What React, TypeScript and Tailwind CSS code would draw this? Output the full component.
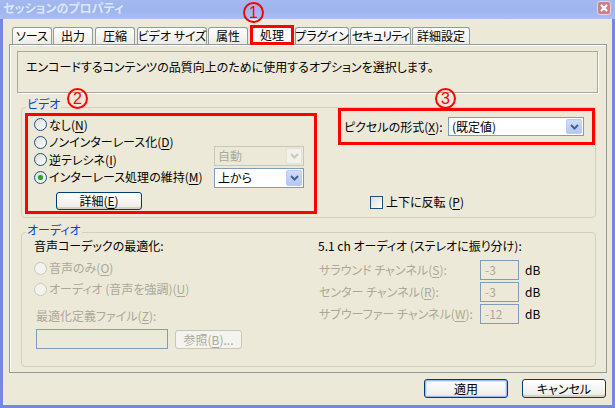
import React from "react";

type Kids = { children?: React.ReactNode };

const Mn: React.FC<Kids> = ({ children }) => <span className="underline underline-offset-[2px]">{children}</span>;

const Chevron: React.FC<{ color: string }> = ({ color }) => (
  <svg width="9" height="6" viewBox="0 0 9 6">
    <path d="M1 1 L4.5 4.5 L8 1" fill="none" stroke={color} strokeWidth="2" />
  </svg>
);

const Radio: React.FC<Kids & { checked?: boolean; disabled?: boolean; className?: string }> = ({
  checked = false,
  disabled = false,
  className = "",
  children,
}) => (
  <div className={`flex items-center gap-[2px] ${disabled ? "text-[#ACA899]" : "text-black"} ${className}`}>
    <span
      className={`flex h-[13px] w-[13px] items-center justify-center rounded-full border ${
        disabled ? "border-[#CAC8BB] bg-[#F4F3EE]" : "border-[#1C5180] bg-gradient-to-br from-[#DCDCD7] to-white"
      }`}
    >
      {checked && <span className="h-[5px] w-[5px] rounded-full bg-[#2FA12F] shadow-[0_0_1px_#6BD06B]" />}
    </span>
    <span className="whitespace-nowrap">{children}</span>
  </div>
);

const Combo: React.FC<{ value: string; disabled?: boolean; className: string }> = ({ value, disabled = false, className }) => (
  <div
    className={`flex items-center justify-between border pl-[3px] ${
      disabled ? "border-[#C9C7BA] bg-[#ECE9D8] text-[#ACA899]" : "border-[#7F9DB9] bg-white text-black"
    } ${className}`}
  >
    <span className="whitespace-nowrap">{value}</span>
    <span
      className={`mr-[1px] flex h-[calc(100%-2px)] w-[16px] items-center justify-center rounded-[2px] border ${
        disabled ? "border-[#E3E1D6] bg-[#F2F1EB]" : "border-[#B9CDFA] bg-gradient-to-b from-[#CFDCFB] to-[#B3C7F6]"
      }`}
    >
      <Chevron color={disabled ? "#C9C7BA" : "#4D6185"} />
    </span>
  </div>
);

const XPButton: React.FC<Kids & { className: string; def?: boolean; disabled?: boolean }> = ({
  children,
  className,
  def = false,
  disabled = false,
}) => (
  <div
    className={`flex items-center justify-center rounded-[3px] border whitespace-nowrap ${
      disabled
        ? "border-[#C9C7BA] bg-[#F4F3EE] text-[#ACA899]"
        : "border-[#003C74] bg-gradient-to-b from-white to-[#ECEBE6] text-black"
    } ${def ? "shadow-[inset_0_0_0_1px_#9DBCF2,inset_0_0_0_2px_#CEE7FF]" : disabled ? "" : "shadow-[inset_0_-2px_0_#D6D0C5]"} ${className}`}
  >
    {children}
  </div>
);

const TextBox: React.FC<{ value?: string; className: string }> = ({ value = "", className }) => (
  <div className={`flex items-center border border-[#7F9DB9] bg-[#ECE9D8] pl-[4px] text-[#ACA899] ${className}`}>{value}</div>
);

const Circled: React.FC<{ n: string; className: string }> = ({ n, className }) => (
  <div
    className={`absolute z-20 flex h-[21px] w-[21px] items-center justify-center rounded-full border-2 border-[#FF0000] font-['Liberation_Sans',sans-serif] text-[16px] leading-none text-[#FF0000] ${className}`}
  >
    {n}
  </div>
);

const tabs = [
  { label: "ソース", cls: "w-[40px] mr-[1px]" },
  { label: "出力", cls: "w-[40px] mr-[2px]" },
  { label: "圧縮", cls: "w-[40px] mr-[2px]" },
  { label: "ビデオ サイズ", cls: "w-[70px] mr-[1px]" },
  { label: "属性", cls: "w-[40px] mr-[2px]" },
  { label: "処理", cls: "w-[44px] mr-[1px]", active: true },
  { label: "プラグイン", cls: "w-[54px] mr-[1px]" },
  { label: "セキュリティ", cls: "w-[61px] mr-[1px] tracking-[-0.8px]" },
  { label: "詳細設定", cls: "w-[58px]" },
];

const channels = [
  { label: "サラウンド チャンネル", key: "S", value: "-3", cls: "mt-[7px]" },
  { label: "センター チャンネル", key: "R", value: "-3", cls: "mt-[2px]" },
  { label: "サブウーファー チャンネル", key: "W", value: "-12", cls: "mt-[2px]" },
];

export default function App() {
  return (
    <div className="relative flex h-[408px] w-[615px] flex-col overflow-hidden bg-[#ECE9D8] font-['Noto_Sans_CJK_JP',sans-serif] text-[12px] leading-[14px] text-black [font-feature-settings:'palt']">
      {/* title bar */}
      <div className="flex h-[19px] shrink-0 items-center justify-between bg-gradient-to-b from-[#A3B9EF] via-[#9DB4EE] to-[#A9BEF1] pl-[3px] pr-[4px]">
        <span className="mt-[-4px] text-[12px] font-bold text-[#DCE6FA]">セッションのプロパティ</span>
        <span className="mt-[-3px] flex h-[14px] w-[14px] items-center justify-center rounded-[3px] border border-[#E9D4DA] bg-[#C8828F]">
          <svg width="8" height="8" viewBox="0 0 8 8">
            <path d="M1 1 L7 7 M7 1 L1 7" stroke="white" strokeWidth="2" />
          </svg>
        </span>
      </div>

      <div className="flex flex-1 flex-col border-x-[3px] border-b-[3px] border-[#7388E4] pt-[6px]">
        {/* tabs */}
        <div className="flex h-[19px] items-end pl-[9px]">
          {tabs.map((t) =>
            t.active ? (
              <div
                key={t.label}
                className={`relative z-10 mb-[-1px] flex h-[20px] items-center justify-center border-[3px] border-[#FF0000] bg-[#FCFCFE] ${t.cls}`}
              >
                {t.label}
              </div>
            ) : (
              <div
                key={t.label}
                className={`flex h-[17px] items-center justify-center whitespace-nowrap rounded-t-[3px] border border-b-0 border-[#919B9C] bg-gradient-to-b from-white to-[#ECEBE6] ${t.cls}`}
              >
                {t.label}
              </div>
            )
          )}
        </div>

        {/* tab panel */}
        <div className="ml-[6px] flex h-[329px] w-[598px] flex-col border border-[#919B9C] shadow-[inset_1px_1px_0_#fff]">
          <div className="ml-[7px] mt-[6px] h-[42px] w-[581px] border border-[#ACA899] pl-[8px] pt-[8px] shadow-[1px_1px_0_#fff]">
            エンコードするコンテンツの品質向上のために使用するオプションを選択します。
          </div>

          {/* video */}
          <div className="relative ml-[11px] mt-[14px] flex h-[111px] w-[575px] items-start justify-between rounded-[4px] border border-[#D0D0BF]">
            <span className="absolute left-[4px] top-[-11px] bg-[#ECE9D8] px-[1px] text-[#0046D5]">ビデオ</span>

            <div className="ml-[3px] mt-[5px] flex h-[101px] w-[292px] border-[3px] border-[#FF0000]">
              <div className="flex w-[186px] flex-col pl-[6px]">
                <Radio className="h-[17px]">
                  なし(<Mn>N</Mn>)
                </Radio>
                <Radio className="h-[18px]">
                  ノンインターレース化(<Mn>D</Mn>)
                </Radio>
                <Radio className="h-[17px]">
                  逆テレシネ(<Mn>I</Mn>)
                </Radio>
                <Radio className="h-[18px]" checked>
                  インターレース処理の維持(<Mn>M</Mn>)
                </Radio>
                <XPButton className="ml-[22px] mt-[6px] h-[18px] w-[86px]">
                  詳細(<Mn>E</Mn>)
                </XPButton>
              </div>
              <div className="flex flex-col gap-[2px] pt-[30px]">
                <Combo value="自動" disabled className="h-[20px] w-[90px]" />
                <Combo value="上から" className="h-[20px] w-[90px]" />
              </div>
            </div>

            <div className="flex w-[257px] flex-col">
              <div className="flex h-[37px] items-center justify-between border-[3px] border-[#FF0000] pl-[3px] pr-[8px]">
                <span className="whitespace-nowrap">
                  ピクセルの形式(<Mn>X</Mn>):
                </span>
                <Combo value="(既定値)" className="h-[19px] w-[136px]" />
              </div>
              <div className="ml-[32px] mt-[50px] flex items-center gap-[3px]">
                <span className="h-[13px] w-[13px] border border-[#1C5180] bg-gradient-to-br from-[#DCDCD7] to-white" />
                <span>
                  上下に反転 (<Mn>P</Mn>)
                </span>
              </div>
            </div>
          </div>

          {/* audio */}
          <div className="relative ml-[11px] mt-[14px] flex h-[135px] w-[575px] rounded-[4px] border border-[#D0D0BF]">
            <span className="absolute left-[4px] top-[-10px] bg-[#ECE9D8] px-[1px] text-[#0046D5]">オーディオ</span>

            <div className="flex w-[296px] flex-col pl-[12px] pt-[6px]">
              <span className="h-[14px]">音声コーデックの最適化:</span>
              <Radio disabled className="mt-[6px] h-[18px]">
                音声のみ(<Mn>O</Mn>)
              </Radio>
              <Radio disabled className="mt-[3px] h-[18px]">
                オーディオ (音声を強調)(<Mn>U</Mn>)
              </Radio>
              <span className="mt-[11px] pl-[2px] text-[#ACA899]">
                最適化定義ファイル(<Mn>Z</Mn>):
              </span>
              <div className="mt-[6px] flex items-start gap-[7px] pl-[2px]">
                <TextBox className="h-[20px] w-[132px]" />
                <XPButton disabled className="mt-[1px] h-[19px] w-[67px]">
                  参照(<Mn>B</Mn>)...
                </XPButton>
              </div>
            </div>

            <div className="flex flex-col pt-[6px]">
              <span className="h-[14px] whitespace-nowrap">5.1 ch オーディオ (ステレオに振り分け):</span>
              {channels.map((c) => (
                <div key={c.key} className={`flex h-[20px] items-center ${c.cls}`}>
                  <span className="w-[162px] whitespace-nowrap pl-[1px] text-[#ACA899]">
                    {c.label}(<Mn>{c.key}</Mn>):
                  </span>
                  <TextBox value={c.value} className="h-[20px] w-[39px]" />
                  <span className="ml-[6px]">dB</span>
                </div>
              ))}
            </div>
          </div>
        </div>

        {/* dialog buttons */}
        <div className="mt-[6px] flex justify-end gap-[14px] pr-[6px]">
          <XPButton def className="h-[19px] w-[84px]">
            適用
          </XPButton>
          <XPButton className="h-[19px] w-[84px]">キャンセル</XPButton>
        </div>
      </div>

      <Circled n="1" className="left-[243px] top-[2px]" />
      <Circled n="2" className="left-[67px] top-[88px]" />
      <Circled n="3" className="left-[435px] top-[88px]" />
    </div>
  );
}
